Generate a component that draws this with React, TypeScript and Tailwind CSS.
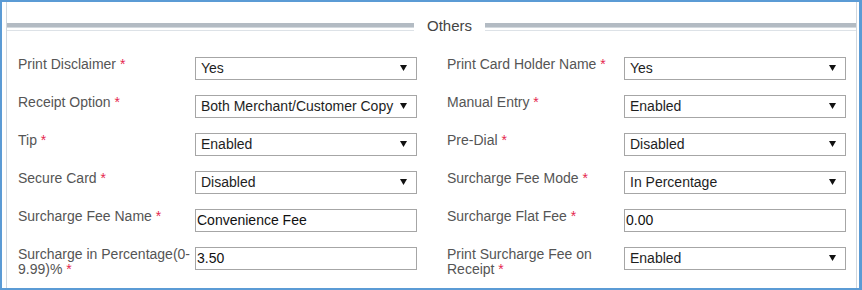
import React from "react";

type Field = {
  label: React.ReactNode;
  kind: "select" | "input";
  value: string;
};

const Req = () => <span className="text-[#e5264f]"> *</span>;

const left: Field[] = [
  { label: <>Print Disclaimer<Req /></>, kind: "select", value: "Yes" },
  { label: <>Receipt Option<Req /></>, kind: "select", value: "Both Merchant/Customer Copy" },
  { label: <>Tip<Req /></>, kind: "select", value: "Enabled" },
  { label: <>Secure Card<Req /></>, kind: "select", value: "Disabled" },
  { label: <>Surcharge Fee Name<Req /></>, kind: "input", value: "Convenience Fee" },
  {
    label: (
      <>
        Surcharge in Percentage(0-
        <br />
        9.99)%<Req />
      </>
    ),
    kind: "input",
    value: "3.50",
  },
];

const right: Field[] = [
  { label: <>Print Card Holder Name<Req /></>, kind: "select", value: "Yes" },
  { label: <>Manual Entry<Req /></>, kind: "select", value: "Enabled" },
  { label: <>Pre-Dial<Req /></>, kind: "select", value: "Disabled" },
  { label: <>Surcharge Fee Mode<Req /></>, kind: "select", value: "In Percentage" },
  { label: <>Surcharge Flat Fee<Req /></>, kind: "input", value: "0.00" },
  {
    label: (
      <>
        Print Surcharge Fee on
        <br />
        Receipt<Req />
      </>
    ),
    kind: "select",
    value: "Enabled",
  },
];

function Control({ f }: { f: Field }) {
  if (f.kind === "input") {
    return (
      <div className="w-[222px] h-[23px] border border-[#a6a6a6] bg-white pl-[1px] text-[14px] leading-[21px] text-[#111] whitespace-nowrap overflow-hidden">
        {f.value}
      </div>
    );
  }
  return (
    <div className="relative w-[222px] h-[23px] border border-[#a6a6a6] bg-white pl-[5px] text-[14px] leading-[21px] text-[#1e1e1e] whitespace-nowrap overflow-hidden">
      {f.value}
      <svg
        className="absolute right-[9px] top-[7px]"
        width="7"
        height="6"
        viewBox="0 0 7 6"
      >
        <polygon points="0,0 7,0 3.5,6" fill="#111" />
      </svg>
    </div>
  );
}

function Row({ f }: { f: Field }) {
  return (
    <div className="flex items-start h-[23px]">
      <div className="w-[177px] shrink-0 text-[14px] leading-[15px] text-[#555]">
        {f.label}
      </div>
      <Control f={f} />
    </div>
  );
}

function Line() {
  return (
    <div className="flex flex-col">
      <div className="h-[4px] bg-[#b3bbc3]" />
      <div className="h-px bg-[#d3d9de]" />
      <div className="h-[2px] bg-white" />
      <div className="h-px bg-[#dde2e7]" />
    </div>
  );
}

export default function App() {
  const cells: Field[] = [];
  for (let i = 0; i < left.length; i++) {
    cells.push(left[i], right[i]);
  }
  return (
    <div
      className="w-[862px] h-[290px] bg-white border-t-2 border-l-2 border-b-2 border-r-[3px] border-[#5b9bd5] pl-[4px] pr-[2px] overflow-hidden"
      style={{ fontFamily: '"Liberation Sans", Arial, sans-serif' }}
    >
      <div className="h-full border-x border-[#d0d7de] pt-[15px]">
        <div className="flex items-start h-[17px]">
          <div className="w-[407px] mt-[6px]">
            <Line />
          </div>
          <div className="mx-[13px] text-[15px] leading-[17px] text-[#444]">Others</div>
          <div className="flex-1 mt-[6px]">
            <Line />
          </div>
        </div>
        <div className="mt-[23px] pl-[11px] grid grid-cols-[399px_399px] gap-x-[30px] gap-y-[15px]">
          {cells.map((f, i) => (
            <Row key={i} f={f} />
          ))}
        </div>
      </div>
    </div>
  );
}
